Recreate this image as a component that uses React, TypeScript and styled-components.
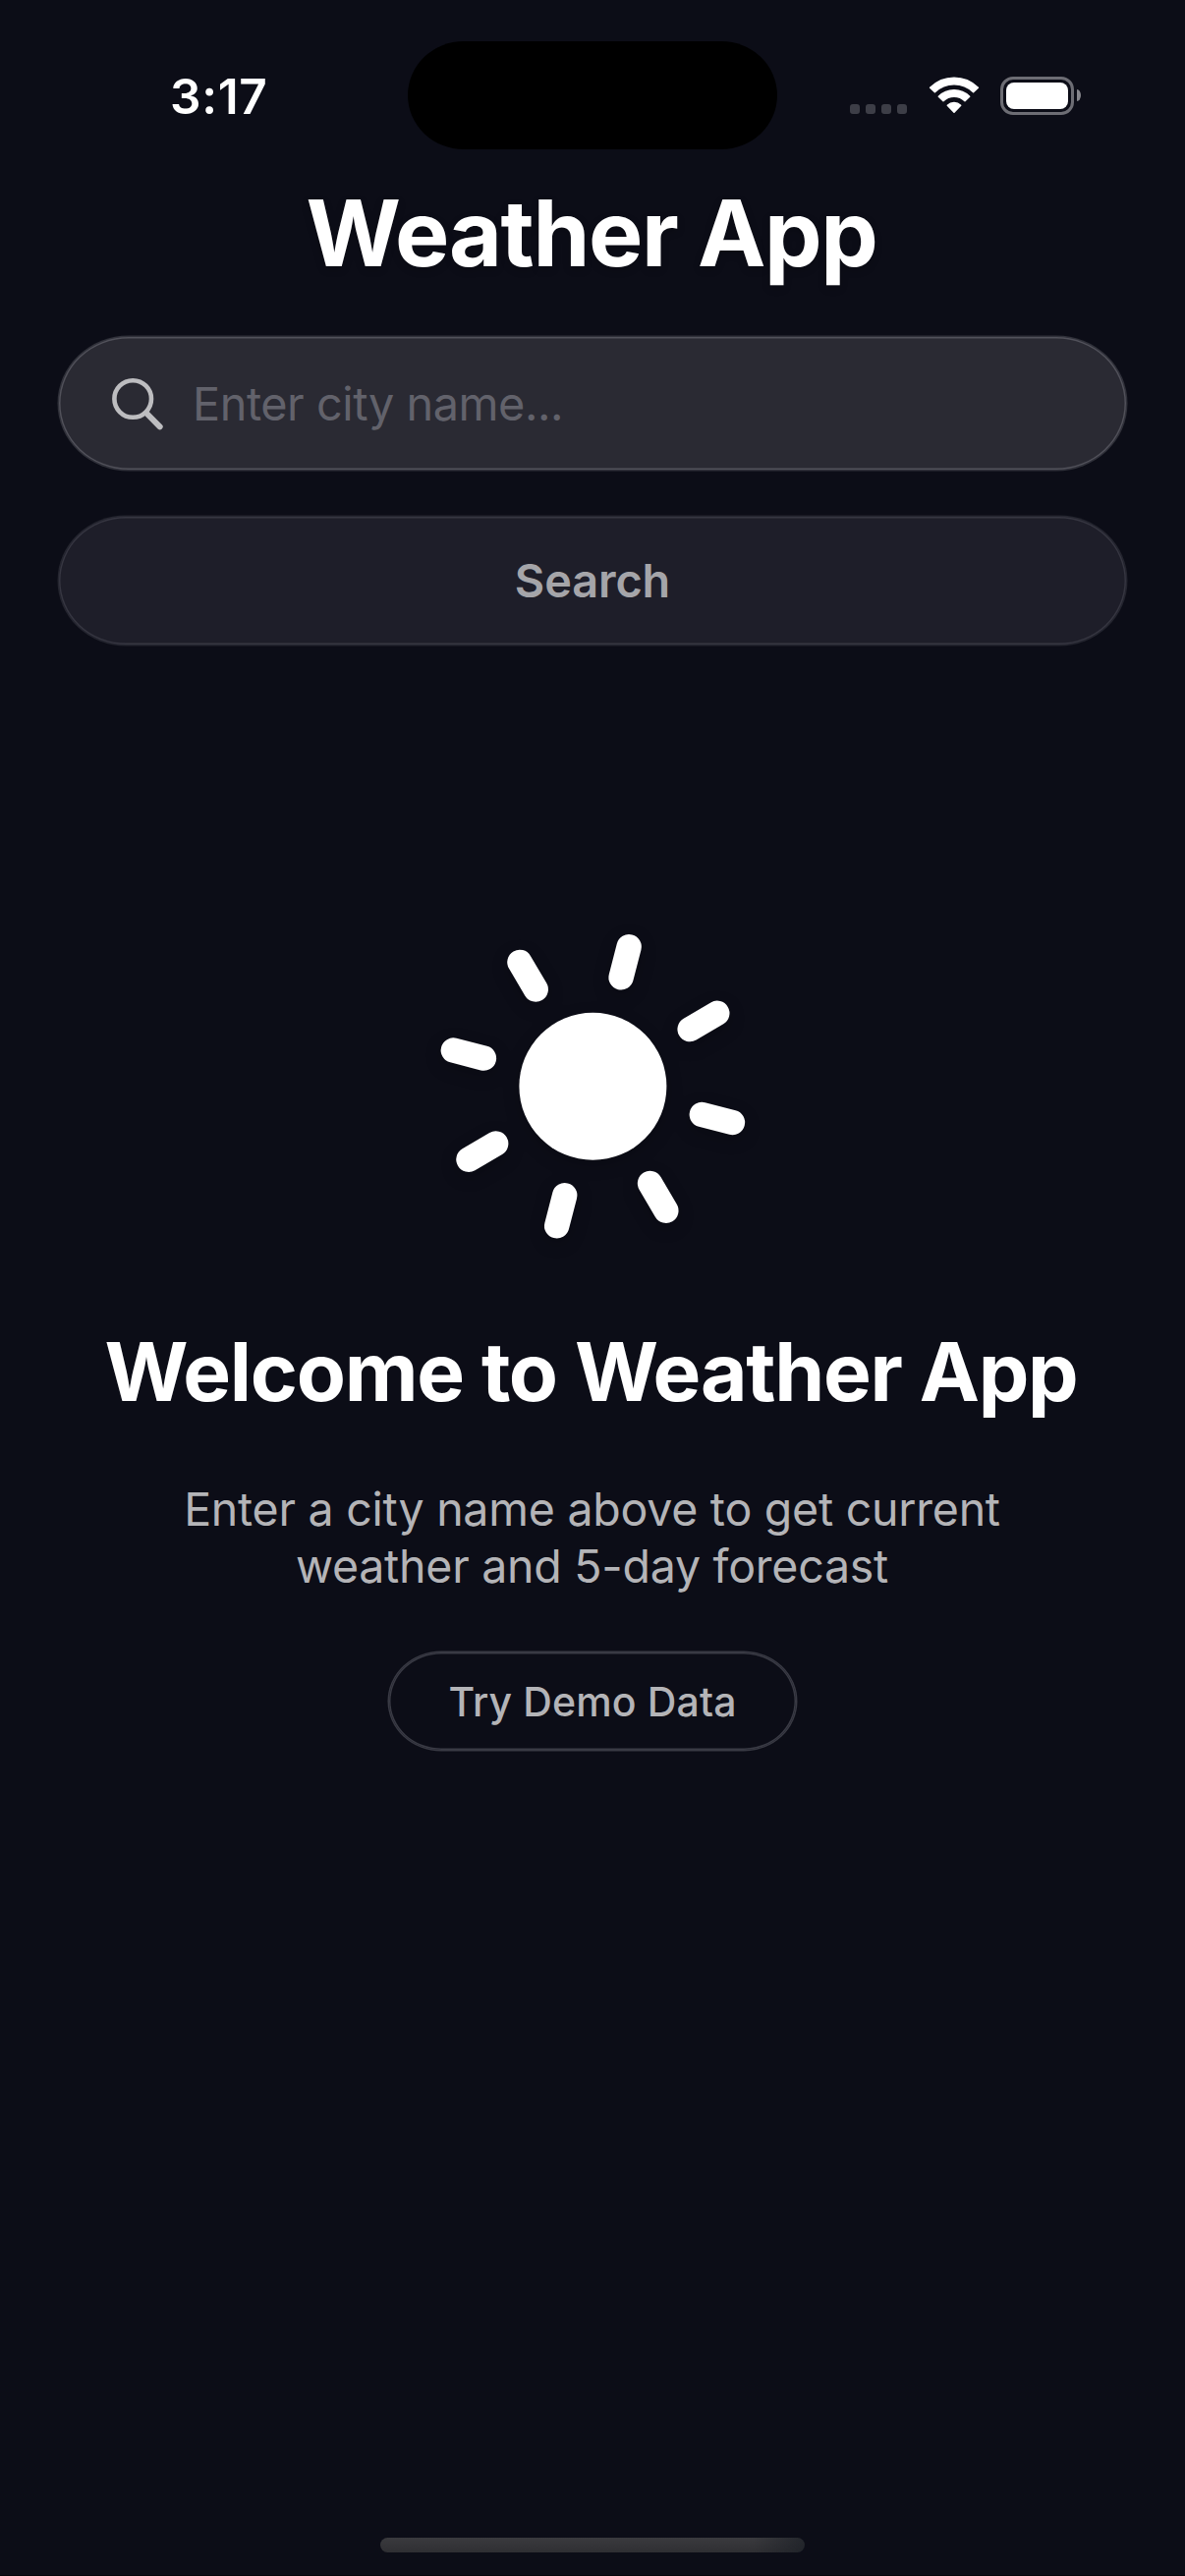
import React from "react";
import styled, { createGlobalStyle } from "styled-components";

const GlobalStyle = createGlobalStyle`
  *, *::before, *::after { box-sizing: border-box; }
  html, body { margin: 0; padding: 0; background: #0c0d17; }
  button, input { font: inherit; border: 0; margin: 0; padding: 0; background: none; outline: none; }
  svg { display: block; flex: none; }
`;

const Screen = styled.div`
  width: 1206px;
  height: 2622px;
  display: flex;
  flex-direction: column;
  align-items: center;
  overflow: hidden;
  background: #0c0d17;
  border-bottom: 1px solid #05050b;
  color: #fff;
  font-family: Inter, "Liberation Sans", sans-serif;
  font-kerning: normal;
`;

const StatusBar = styled.header`
  width: 100%;
  height: 194px;
  flex: none;
  display: grid;
  grid-template-columns: 1fr 376px 1fr;
  align-items: center;
`;

const Clock = styled.time`
  padding: 2px 0 0 173px;
  font-size: 49.5px;
  line-height: 60px;
  font-weight: 600;
  letter-spacing: 0.7px;
`;

const Island = styled.div`
  height: 110px;
  border-radius: 57px / 55px;
  background: #000;
`;

const StatusIcons = styled.div`
  display: flex;
  align-items: center;
  height: 40px;
  padding-left: 74px;
`;

const SignalDots = styled.div`
  display: flex;
  gap: 6px;
  align-self: flex-end;
  margin: 0 22px 1px 0;
`;

const Dot = styled.i`
  width: 10px;
  height: 10px;
  border-radius: 3px;
  background: #3d3e47;
`;

const BatteryShell = styled.div`
  width: 75px;
  height: 39px;
  margin: 0 3px 0 21px;
  padding: 3px;
  border: 3px solid #6d6d74;
  border-radius: 13px;
`;

const BatteryCharge = styled.div`
  height: 100%;
  border-radius: 8px;
  background: #fff;
`;

const BatteryNub = styled.div`
  width: 4px;
  height: 12px;
  border-radius: 0 4px 4px 0 / 0 6px 6px 0;
  background: #86868c;
`;

const Title = styled.h1`
  margin: 0 0 63px;
  padding-right: 2px;
  font-size: 93px;
  line-height: 86px;
  font-weight: 700;
  letter-spacing: -1.4px;
  white-space: nowrap;
  text-shadow: 0 3px 8px rgba(0, 0, 0, 0.2);
`;

const SearchForm = styled.form`
  width: 1086px;
  display: flex;
  flex-direction: column;
  gap: 48px;
`;

const SearchField = styled.label`
  height: 135px;
  padding: 0 54px;
  display: flex;
  align-items: center;
  gap: 28px;
  border-radius: 71px / 67.5px;
  background: #2a2a33;
  box-shadow: 0 0 0 1.5px #30313a, inset 0 0 0 1.5px #51515a;
`;

const CityInput = styled.input`
  flex: 1;
  min-width: 0;
  height: 60px;
  color: #fff;
  font-size: 46.8px;
  line-height: 60px;
  letter-spacing: -0.45px;

  &::placeholder {
    color: #62626b;
    opacity: 1;
  }
`;

const SearchButton = styled.button`
  height: 130px;
  border-radius: 68px / 65px;
  background: #1e1e29;
  box-shadow: 0 0 0 1.5px #24252f, inset 0 0 0 1.5px #363641;
  color: #a5a5a9;
  font-size: 46.8px;
  line-height: 60px;
  font-weight: 600;
  letter-spacing: -0.1px;
`;

const Welcome = styled.main`
  display: flex;
  flex-direction: column;
  align-items: center;
  margin-top: 290px;
`;

const SunIcon = styled.svg`
  filter: drop-shadow(0 5px 8px rgba(0, 0, 0, 0.2));
`;

const WelcomeHeading = styled.h2`
  margin: 81px 0 60px;
  padding-right: 3px;
  font-size: 82px;
  line-height: 100px;
  font-weight: 700;
  letter-spacing: -1.3px;
  white-space: nowrap;
`;

const Hint = styled.p`
  margin: 0 0 59px;
  padding-right: 1px;
  color: #b4b4b7;
  font-size: 46.5px;
  line-height: 58px;
  letter-spacing: -0.25px;
  text-align: center;
  white-space: nowrap;
`;

const DemoButton = styled.button`
  width: 414px;
  height: 99px;
  border-radius: 53px / 49.5px;
  box-shadow: 0 0 0 1.5px #393a44, inset 0 0 0 1.5px #393a44;
  color: #b4b4b7;
  font-size: 41px;
  line-height: 50px;
  font-weight: 500;
  letter-spacing: 0.13px;
`;

const HomeIndicator = styled.div`
  width: 432px;
  height: 15px;
  flex: none;
  margin: auto 0 23px;
  border-radius: 7.5px;
  background: linear-gradient(90deg, transparent 88%, rgba(26, 30, 37, 0.7) 100%),
    linear-gradient(#3a3a3e, #2f2f33);
`;

const RAY_ANGLES = [0, 45, 90, 135, 180, 225, 270, 315].map((step) => step + 14.5);

function WifiIcon() {
  return (
    <svg width="52" height="38" viewBox="0 0 52 38" fill="#fff" stroke="#fff" strokeLinejoin="round">
      <path
        strokeWidth="1.5"
        d="M1.6 11.3 A34.6 34.6 0 0 1 50.4 11.3 L45.6 15.8 A28 28 0 0 0 6.4 15.8 Z"
      />
      <path
        strokeWidth="1.5"
        d="M10.3 20.2 A22.2 22.2 0 0 1 41.7 20.2 L37 24.7 A15.6 15.6 0 0 0 15 24.7 Z"
      />
      <path strokeWidth="1.5" d="M19.3 29.2 A9.8 9.8 0 0 1 32.7 29.2 L26 36.3 Z" />
    </svg>
  );
}

function SearchGlyph() {
  return (
    <svg width="54" height="54" viewBox="0 0 54 54" fill="none" stroke="#bdbdc0" strokeLinecap="round">
      <circle cx="21.2" cy="22" r="18.8" strokeWidth="4.6" />
      <path d="M35 36.5 L48.7 50.3" strokeWidth="6" />
    </svg>
  );
}

function Sun() {
  return (
    <SunIcon width="320" height="320" viewBox="-160.4 -159.8 320 320">
      <circle r="75" fill="#fff" />
      {RAY_ANGLES.map((angle) => (
        <line
          key={angle}
          y1="-114.6"
          y2="-146.7"
          stroke="#fff"
          strokeWidth="25.4"
          strokeLinecap="round"
          transform={`rotate(${angle})`}
        />
      ))}
    </SunIcon>
  );
}

export default function App() {
  return (
    <Screen>
      <GlobalStyle />
      <StatusBar>
        <Clock>3:17</Clock>
        <Island />
        <StatusIcons>
          <SignalDots>
            <Dot />
            <Dot />
            <Dot />
            <Dot />
          </SignalDots>
          <WifiIcon />
          <BatteryShell>
            <BatteryCharge />
          </BatteryShell>
          <BatteryNub />
        </StatusIcons>
      </StatusBar>
      <Title>Weather App</Title>
      <SearchForm onSubmit={(event) => event.preventDefault()}>
        <SearchField>
          <SearchGlyph />
          <CityInput placeholder="Enter city name..." />
        </SearchField>
        <SearchButton type="submit">Search</SearchButton>
      </SearchForm>
      <Welcome>
        <Sun />
        <WelcomeHeading>Welcome to Weather App</WelcomeHeading>
        <Hint>
          Enter a city name above to get current
          <br />
          weather and 5-day forecast
        </Hint>
        <DemoButton type="button">Try Demo Data</DemoButton>
      </Welcome>
      <HomeIndicator />
    </Screen>
  );
}
